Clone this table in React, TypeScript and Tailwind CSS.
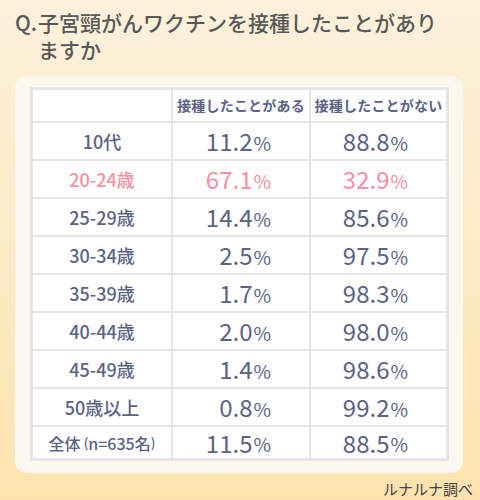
import React from 'react';

type Row = { label: string; yes: string; no: string; pink?: boolean };

const rows: Row[] = [
  { label: '10代', yes: '11.2', no: '88.8' },
  { label: '20-24歳', yes: '67.1', no: '32.9', pink: true },
  { label: '25-29歳', yes: '14.4', no: '85.6' },
  { label: '30-34歳', yes: '2.5', no: '97.5' },
  { label: '35-39歳', yes: '1.7', no: '98.3' },
  { label: '40-44歳', yes: '2.0', no: '98.0' },
  { label: '45-49歳', yes: '1.4', no: '98.6' },
  { label: '50歳以上', yes: '0.8', no: '99.2' },
];

const font = { fontFamily: '"Noto Sans CJK JP", "Noto Sans", sans-serif' };

const Value: React.FC<{ v: string; pink?: boolean; h: string }> = ({ v, pink, h }) => (
  <div
    className={`bg-white flex items-center justify-end pr-[38px] ${h} ${pink ? 'text-[#f58fa2]' : 'text-[#5c6385]'}`}
  >
    <span className="text-[24px] font-normal leading-none">{v}</span>
    <span className="text-[19px] font-normal leading-none ml-[1px] mt-[2px]">%</span>
  </div>
);

const App: React.FC = () => {
  return (
    <div
      className="w-[480px] h-[500px] bg-gradient-to-b from-[#fdf1dc] to-[#fee3ae] flex flex-col overflow-hidden"
      style={font}
    >
      <h1 className="flex px-[15px] pt-[9px] text-[21px] leading-[27px] font-medium text-[#595959]">
        <span className="w-[23px] shrink-0 whitespace-nowrap">Q.</span>
        <span>
          子宮頸がんワクチンを接種したことがあり
          <br />
          ますか
        </span>
      </h1>

      <div className="mx-[15px] mt-[13px] w-[448px] rounded-[12px] bg-[#fdf8ef] pl-[15px] pr-[14px] pt-[11px] pb-[12px]">
        <div className="grid grid-cols-[138px_136px_135px] gap-[2px] bg-[#e6e6e8] p-[3px] text-[#5c6385]">
          <div className="bg-white h-[31px]" />
          <div className="bg-white h-[31px] flex items-center justify-center text-[14px] font-bold tracking-[0.2px]">
            接種したことがある
          </div>
          <div className="bg-white h-[31px] flex items-center justify-center text-[14px] font-bold tracking-[0.2px]">
            接種したことがない
          </div>

          {rows.map(r => (
            <React.Fragment key={r.label}>
              <div
                className={`bg-white h-[36px] flex items-center justify-center text-[18px] font-medium ${r.pink ? 'text-[#f58fa2]' : ''}`}
              >
                {r.label}
              </div>
              <Value v={r.yes} pink={r.pink} h="h-[36px]" />
              <Value v={r.no} pink={r.pink} h="h-[36px]" />
            </React.Fragment>
          ))}

          <div className="bg-white h-[31px] flex items-center justify-center text-[16px] font-medium">
            全体<span className="text-[13px] ml-[3px]">(</span>n=635名<span className="text-[13px]">)</span>
          </div>
          <Value v="11.5" h="h-[31px]" />
          <Value v="88.5" h="h-[31px]" />
        </div>
      </div>

      <div className="mt-[6px] pr-[7px] text-right text-[15px] leading-[20px] text-[#444]">ルナルナ調べ</div>
    </div>
  );
};

export default App;
